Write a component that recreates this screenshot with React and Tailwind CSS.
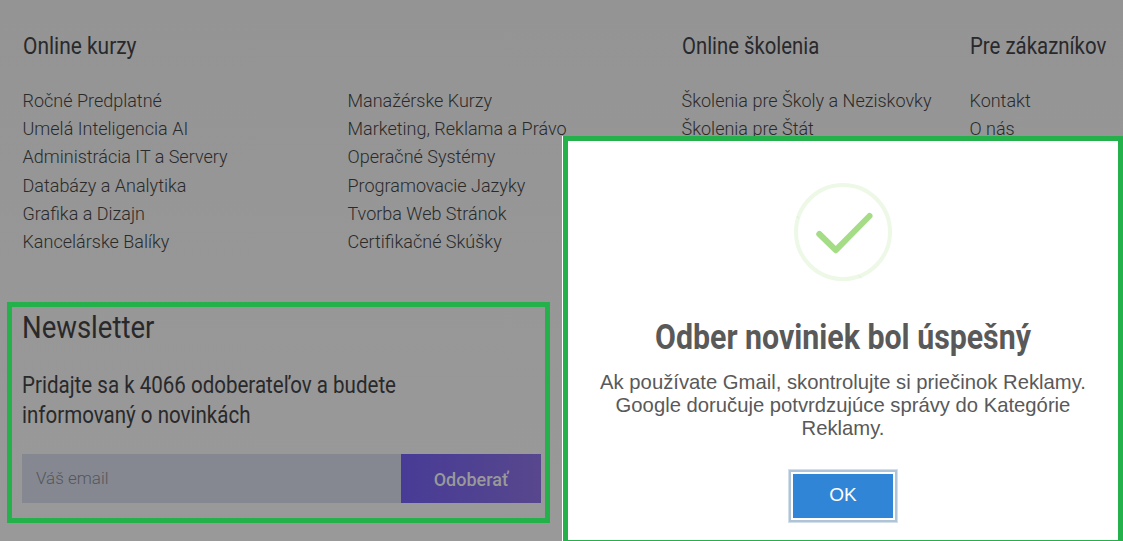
import React from "react";

const courses = [
  "Ročné Predplatné",
  "Umelá Inteligencia AI",
  "Administrácia IT a Servery",
  "Databázy a Analytika",
  "Grafika a Dizajn",
  "Kancelárske Balíky",
];
const moreCourses = [
  "Manažérske Kurzy",
  "Marketing, Reklama a Právo",
  "Operačné Systémy",
  "Programovacie Jazyky",
  "Tvorba Web Stránok",
  "Certifikačné Skúšky",
];

function Links({ items }) {
  return (
    <ul className="pl-[0.5px] text-[18px] leading-[28.2px] font-light whitespace-nowrap text-[#2a2a2a]">
      {items.map((item) => (
        <li key={item}>{item}</li>
      ))}
    </ul>
  );
}

function Heading({ children, className = "", scale }) {
  return (
    <h4 className={"h-[30px] pl-[0.5px] text-[23px] leading-[30px] whitespace-nowrap text-[#29292b] " + className}>
      <span className={"inline-block origin-left " + scale}>{children}</span>
    </h4>
  );
}

export default function App() {
  return (
    <div className="relative h-[541px] w-[1123px] overflow-hidden bg-linear-to-b from-[#949495] via-[#979797] to-[#999999] font-['Roboto',sans-serif]">
      <footer className="pt-[32px]">
        <div className="grid grid-cols-[325px_334px_288px_1fr] pl-[22px]">
          <Heading className="col-span-2" scale="scale-x-[0.91]">Online kurzy</Heading>
          <Heading scale="scale-x-[0.882]">Online školenia</Heading>
          <Heading scale="scale-x-[0.887]">Pre zákazníkov</Heading>
          <div className="pt-[25px]"><Links items={courses} /></div>
          <div className="pt-[25px]"><Links items={moreCourses} /></div>
          <div className="pt-[25px]"><Links items={["Školenia pre Školy a Neziskovky", "Školenia pre Štát"]} /></div>
          <div className="pt-[25px]"><Links items={["Kontakt", "O nás"]} /></div>
        </div>
        <section className="mt-[46px] ml-[7px] h-[221px] w-[543px] border-[5px] border-[#24b14c] pl-[10px] text-[#29292b]">
          <h2 className="h-10 text-[32px] leading-10 whitespace-nowrap">
            <span className="inline-block origin-left scale-x-[0.86]">Newsletter</span>
          </h2>
          <p className="mt-[24px] h-[60px] text-[23px] leading-[30px] whitespace-nowrap">
            <span className="inline-block origin-left scale-x-[0.893]">
              Pridajte sa k 4066 odoberateľov a budete
              <br />
              informovaný o novinkách
            </span>
          </p>
          <form className="mt-[23px] flex h-[49px] w-[519px]">
            <input
              className="w-[379px] bg-[#858891] px-[14px] text-[17px] font-light outline-none placeholder:text-[#55565b]"
              placeholder="Váš email"
            />
            <button type="button" className="w-[140px] bg-linear-to-r from-[#473b96] to-[#58478d] pt-[2px] text-[18px] font-medium text-[#999]">
              Odoberať
            </button>
          </form>
        </section>
      </footer>

      <div className="absolute top-[136px] left-[562px] h-[405px] w-[561px] bg-white pl-px">
        <div className="flex h-[405px] flex-col items-center border-x-[5px] border-t-[5px] border-b border-[#24b14c] pt-[42px] text-[#595959]">
          <svg width="98" height="98" viewBox="0 0 98 98" fill="none">
            <circle cx="49" cy="49" r="47" stroke="#edf8e7" strokeWidth="4" />
            <path d="m3 33 2 2.5M64.500 92.500l3 2.500" stroke="#d9f0ce" strokeWidth="0.8" />
            <path d="M25.300 51 41.800 67.200 75.500 33" stroke="#a5dc86" strokeWidth="6" strokeLinecap="round" strokeLinejoin="round" />
          </svg>
          <h2 className="mt-[35px] h-[43px] text-[35px] leading-[44px] font-bold whitespace-nowrap">
            <span className="inline-block scale-x-[0.866]">Odber noviniek bol úspešný</span>
          </h2>
          <p className="mt-[12px] h-[69px] text-center font-['Liberation_Sans',Arial,sans-serif] text-[20.25px] leading-[23px] whitespace-nowrap">
            Ak používate Gmail, skontrolujte si priečinok Reklamy.
            <br />
            Google doručuje potvrdzujúce správy do Kategórie
            <br />
            Reklamy.
          </p>
          <button className="mt-[34px] h-[44px] w-[100px] bg-[#3085d6] pb-[2px] font-['Liberation_Sans',Arial,sans-serif] text-[19px] text-white shadow-[0_0_0_2px_#fff,0_0_0_4px_#b0c4d9,0_0_0_5px_#d3dfe9]">
            OK
          </button>
        </div>
      </div>
    </div>
  );
}
